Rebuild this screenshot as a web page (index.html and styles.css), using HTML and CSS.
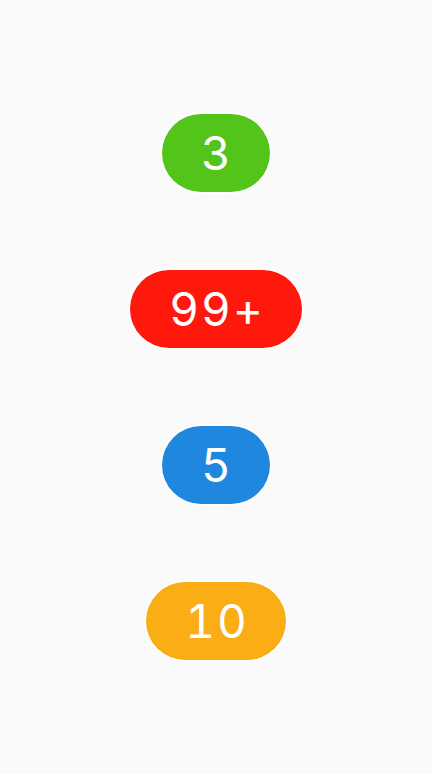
FILE: index.html
```html
<!DOCTYPE html>
<html>
<head>
<meta charset="utf-8">
<link rel="stylesheet" href="styles.css">
</head>
<body>
<main class="list">
  <span class="badge badge-green">3</span>
  <span class="badge badge-red">99+</span>
  <span class="badge badge-blue">5</span>
  <span class="badge badge-orange">10</span>
</main>
</body>
</html>
```
FILE: styles.css
```css
html, body {
  margin: 0;
  padding: 0;
  background: #fafafa;
}
.list {
  display: flex;
  flex-direction: column;
  align-items: center;
  gap: 78px;
  padding-top: 114px;
  height: 774px;
  box-sizing: border-box;
}
.badge {
  box-sizing: border-box;
  display: inline-flex;
  align-items: center;
  justify-content: center;
  height: 78px;
  padding: 0 37px 0 39px;
  border-radius: 39px;
  box-shadow: 0 0 0 1.5px #ffffff;
  color: #ffffff;
  font-family: "Inter", "Liberation Sans", Arial, sans-serif;
  font-size: 46px;
  font-weight: 400;
  letter-spacing: 2px;
  font-variant-numeric: tabular-nums;
  line-height: 1;
}
.badge-green { background: #52c41a; }
.badge-red { background: #ff190c; }
.badge-blue { background: #1f88de; }
.badge-orange { background: #faad14; }
```
